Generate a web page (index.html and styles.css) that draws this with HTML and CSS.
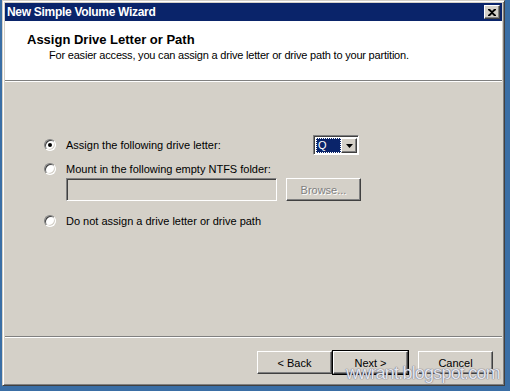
FILE: index.html
```html
<!DOCTYPE html>
<html lang="en">
<head>
    <meta charset="UTF-8">
    <title>New Simple Volume Wizard</title>
    <link rel="stylesheet" href="styles.css">
</head>
<body>
    <div class="window">
        <div class="title-bar">
            <span class="title-text">New Simple Volume Wizard</span>
            <button type="button" class="close-btn" aria-label="Close">
                <svg width="8" height="7" viewBox="0 0 8 7">
                    <path d="M0 0h2l2 2 2-2h2v1L5 3.5 8 6v1H6L4 5 2 7H0V6l3-2.5L0 1z" fill="#000"></path>
                </svg>
            </button>
        </div>

        <div class="header">
            <h1 class="header-title">Assign Drive Letter or Path</h1>
            <p class="header-sub">For easier access, you can assign a drive letter or drive path to your partition.</p>
        </div>
        <div class="sep"></div>

        <div class="content">
            <div class="option option-first">
                <label class="radio-label"><span class="radio checked"></span>Assign the following drive letter:</label>
                <div class="combo">
                    <span class="combo-value">Q</span>
                    <span class="combo-arrow">
                        <svg width="7" height="4" viewBox="0 0 7 4"><path d="M0 0h7L3.5 4z" fill="#000"></path></svg>
                    </span>
                </div>
            </div>

            <div class="option">
                <label class="radio-label"><span class="radio"></span>Mount in the following empty NTFS folder:</label>
            </div>
            <div class="folder-row">
                <div class="textbox"></div>
                <button type="button" class="btn btn-disabled">Browse...</button>
            </div>

            <div class="option">
                <label class="radio-label"><span class="radio"></span>Do not assign a drive letter or drive path</label>
            </div>
        </div>

        <div class="footer">
            <div class="sep"></div>
            <div class="buttons">
                <button type="button" class="btn">&lt; Back</button>
                <button type="button" class="btn btn-default">Next &gt;</button>
                <button type="button" class="btn btn-cancel">Cancel</button>
            </div>
        </div>
    </div>

    <div class="watermark">wwrant.blogspot.com</div>
</body>
</html>
```

FILE: styles.css
```css
* {
    margin: 0;
    padding: 0;
    box-sizing: border-box;
    font-family: "Liberation Sans", Arial, sans-serif;
}

body {
    width: 510px;
    height: 391px;
    background-color: #3a6ea5;
    overflow: hidden;
    position: relative;
}

.window {
    margin-left: 2px;
    width: 503px;
    height: 386px;
    background: #d4d0c8;
    border: 1px solid;
    border-color: #d4d0c8 #404040 #404040 #d4d0c8;
    box-shadow: inset 1px 1px #ffffff, inset -1px -1px #808080;
    padding: 2px;
    display: flex;
    flex-direction: column;
}

.title-bar {
    height: 18px;
    background: #0a246a;
    display: flex;
    align-items: center;
    justify-content: space-between;
    padding: 0 2px 0 2px;
}

.title-text {
    color: #ffffff;
    font-weight: bold;
    font-size: 12px;
    letter-spacing: -0.3px;
}

.close-btn {
    width: 16px;
    height: 14px;
    background: #d4d0c8;
    border: 1px solid;
    border-color: #ffffff #404040 #404040 #ffffff;
    box-shadow: inset -1px -1px #808080;
    display: flex;
    align-items: center;
    justify-content: center;
}

.header {
    height: 59px;
    background: #ffffff;
    padding: 11px 0 0 22px;
}

.header-title {
    font-size: 13px;
    font-weight: bold;
    color: #000000;
    margin-bottom: 2px;
}

.header-sub {
    font-size: 11px;
    color: #000000;
    padding-left: 22px;
    letter-spacing: -0.2px;
}

.sep {
    height: 2px;
    border-top: 1px solid #808080;
    border-bottom: 1px solid #ffffff;
}

.content {
    flex: 1;
    padding: 53px 0 0 39px;
    font-size: 11px;
    color: #000000;
}

.option {
    display: flex;
    align-items: center;
    height: 16px;
}

.option-first {
    height: 20px;
    margin-bottom: 6px;
}

.radio-label {
    display: flex;
    align-items: center;
    width: 269px;
}

.radio {
    width: 12px;
    height: 12px;
    border-radius: 50%;
    background: #ffffff;
    border: 1px solid;
    border-color: #808080 #ffffff #ffffff #808080;
    box-shadow: inset 1px 1px #404040, inset -1px -1px #d4d0c8;
    margin-right: 10px;
    position: relative;
    flex-shrink: 0;
}

.radio.checked::after {
    content: "";
    position: absolute;
    left: 3px;
    top: 3px;
    width: 4px;
    height: 4px;
    border-radius: 50%;
    background: #000000;
}

.combo {
    width: 46px;
    height: 20px;
    background: #ffffff;
    border: 1px solid;
    border-color: #808080 #ffffff #ffffff #808080;
    box-shadow: inset 1px 1px #404040;
    display: flex;
    padding: 2px 1px 1px 2px;
}

.combo-value {
    flex: 1;
    background: #0a246a;
    color: #ffffff;
    font-size: 11px;
    line-height: 15px;
    padding-left: 2px;
    outline: 1px dotted #ffffff;
    outline-offset: -1px;
}

.combo-arrow {
    width: 16px;
    background: #d4d0c8;
    border: 1px solid;
    border-color: #ffffff #404040 #404040 #ffffff;
    box-shadow: inset -1px -1px #808080;
    display: flex;
    align-items: center;
    justify-content: center;
}

.folder-row {
    display: flex;
    gap: 9px;
    padding-left: 22px;
    margin: 1px 0 12px;
}

.textbox {
    width: 211px;
    height: 23px;
    background: #d4d0c8;
    border: 1px solid;
    border-color: #808080 #ffffff #ffffff #808080;
    box-shadow: inset 1px 1px #404040, inset -1px -1px #d4d0c8;
}

.btn {
    width: 75px;
    height: 23px;
    background: #d4d0c8;
    border: 1px solid;
    border-color: #ffffff #404040 #404040 #ffffff;
    box-shadow: inset -1px -1px #808080;
    font-size: 11px;
    color: #000000;
}

.btn-disabled {
    color: #808080;
    text-shadow: 1px 1px #ffffff;
}

.btn-default {
    outline: 1px solid #000000;
    margin-left: 1px;
}

.btn-cancel {
    margin-left: 10px;
}

.footer {
    padding-bottom: 9px;
}

.buttons {
    display: flex;
    padding: 13px 0 0 252px;
}

.watermark {
    position: absolute;
    left: 346px;
    top: 363px;
    font-size: 18px;
    letter-spacing: -0.8px;
    color: #e4e6f0;
    text-shadow: 0 0 1px #6a6a7a, 0 0 1px #6a6a7a;
    pointer-events: none;
}
```
